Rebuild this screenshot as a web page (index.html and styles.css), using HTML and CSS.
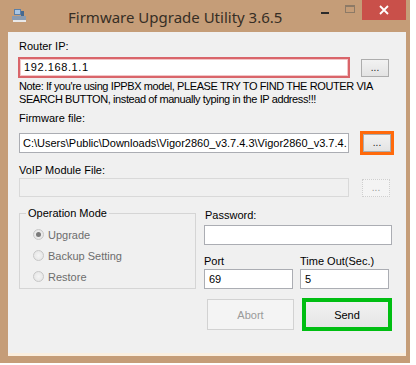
FILE: index.html
```html
<!DOCTYPE html>
<html lang="en">
<head>
    <meta charset="UTF-8">
    <title>Firmware Upgrade Utility 3.6.5</title>
    <link rel="stylesheet" href="styles.css">
</head>
<body>
    <div class="window">
        <!-- title bar -->
        <div class="titlebar">
            <svg class="app-icon" width="16" height="16" viewBox="0 0 16 16">
                <rect x="3" y="1" width="7" height="6" fill="#5b7fa6"/>
                <rect x="4" y="2" width="5" height="4" fill="#a9c6e4"/>
                <rect x="10" y="3" width="3" height="6" fill="#46698f"/>
                <rect x="1" y="8" width="14" height="4" fill="#8a9bb0"/>
                <rect x="2" y="12" width="13" height="2" fill="#e8e8e8"/>
            </svg>
            <div class="title">Firmware Upgrade Utility 3.6.5</div>
            <div class="caption-btns">
                <span class="cap cap-min"><i></i></span>
                <span class="cap cap-max"><i></i></span>
                <span class="cap cap-close">
                    <svg width="10" height="10" viewBox="0 0 10 10">
                        <path d="M1 1 L9 9 M9 1 L1 9" stroke="#fff" stroke-width="1.8"/>
                    </svg>
                </span>
            </div>
        </div>

        <!-- client -->
        <div class="client">
            <div class="label">Router IP:</div>
            <div class="row row-ip">
                <div class="field field-ip">192.168.1.1</div>
                <button class="btn-dots">...</button>
            </div>
            <div class="note">Note: If you're using IPPBX model, PLEASE TRY TO FIND THE ROUTER VIA<br>SEARCH BUTTON, instead of manually typing in the IP address!!!</div>

            <div class="label label-fw">Firmware file:</div>
            <div class="row row-fw">
                <div class="field field-fw">C:\Users\Public\Downloads\Vigor2860_v3.7.4.3\Vigor2860_v3.7.4.</div>
                <div class="mark-orange"><button class="btn-dots">...</button></div>
            </div>

            <div class="label label-voip">VoIP Module File:</div>
            <div class="row row-voip">
                <div class="field field-off"></div>
                <button class="btn-dots btn-off">...</button>
            </div>

            <div class="lower">
                <fieldset class="group">
                    <legend>Operation Mode</legend>
                    <div class="radio"><span class="dot checked"></span>Upgrade</div>
                    <div class="radio"><span class="dot"></span>Backup Setting</div>
                    <div class="radio"><span class="dot"></span>Restore</div>
                </fieldset>

                <div class="side">
                    <div class="label">Password:</div>
                    <div class="field field-pw"></div>
                    <div class="pair">
                        <div class="pair-col">
                            <div class="label">Port</div>
                            <div class="field field-sm">69</div>
                        </div>
                        <div class="pair-col">
                            <div class="label">Time Out(Sec.)</div>
                            <div class="field field-sm">5</div>
                        </div>
                    </div>
                </div>
            </div>

            <div class="actions">
                <button class="btn btn-abort">Abort</button>
                <div class="mark-green"><button class="btn btn-send">Send</button></div>
            </div>
        </div>
    </div>
</body>
</html>
```

FILE: styles.css
```css
* {
    margin: 0;
    padding: 0;
    box-sizing: border-box;
}

body {
    background: #fff;
    font-family: "Liberation Sans", Arial, sans-serif;
    font-size: 11px;
    color: #000;
}

.window {
    width: 410px;
    height: 363px;
    background: #c59d78;
    padding: 0 4px 0 8px;
    display: flex;
    flex-direction: column;
}

/* title bar */
.titlebar {
    height: 32px;
    display: flex;
    align-items: flex-start;
    flex-shrink: 0;
}

.app-icon {
    margin: 8px 0 0 3px;
}

.title {
    margin: 7px 0 0 41px;
    font-family: "Noto Sans", "Open Sans", sans-serif;
    font-size: 15px;
    color: #362e25;
}

.caption-btns {
    margin-left: auto;
    display: flex;
}

.cap {
    height: 20px;
    display: flex;
    align-items: center;
    justify-content: center;
}

.cap-min {
    width: 26px;
}

.cap-min i {
    display: block;
    width: 8px;
    height: 2px;
    background: #2b2b2b;
    margin-top: 6px;
}

.cap-max {
    width: 24px;
}

.cap-max i {
    display: block;
    width: 10px;
    height: 8px;
    border: 1px solid #8d7a66;
    border-top-width: 2px;
    margin-top: -2px;
}

.cap-close {
    width: 44px;
    background: #c9504a;
}

/* client area */
.client {
    flex: 1;
    background: #f0f0f0;
    border-bottom: 3px solid #fbefdf;
    margin-bottom: 7px;
    padding: 7px 0 0 10px;
}

.label {
    height: 14px;
    line-height: 14px;
    padding-left: 1px;
    white-space: nowrap;
}

.row {
    display: flex;
    align-items: center;
}

.row-ip {
    margin-top: 4px;
}

.field {
    height: 20px;
    width: 330px;
    background: #fff;
    border: 1px solid #abadb3;
    padding-left: 4px;
    line-height: 18px;
    white-space: nowrap;
    overflow: hidden;
}

.field-ip {
    width: 332px;
    height: 21px;
    border: 2px solid #d9656a;
    box-shadow: inset 0 0 0 1px #f3c5c7;
    padding-left: 4px;
    line-height: 17px;
    letter-spacing: 0.6px;
}

.btn-dots {
    width: 28px;
    height: 18px;
    border: 1px solid #adadad;
    background: linear-gradient(#f2f2f2, #e3e3e3);
    font-family: inherit;
    font-size: 10px;
    line-height: 12px;
    color: #222;
}

.row-ip .btn-dots {
    margin-left: 11px;
}

.note {
    margin-top: 2px;
    padding-left: 1px;
    line-height: 13px;
    letter-spacing: -0.4px;
    white-space: nowrap;
}

.label-fw {
    margin-top: 5px;
}

.row-fw {
    margin-top: 5px;
    height: 25px;
}

.field-fw {
    margin-left: 1px;
    padding-left: 3px;
}

.mark-orange {
    margin-left: 11px;
    border: 3px solid #ff6a0c;
    display: flex;
}

.label-voip {
    margin-top: 8px;
}

.row-voip {
    margin-top: 1px;
}

.field-off {
    margin-left: 1px;
    height: 19px;
    background: #f0f0f0;
    border-color: #d9d9d9;
}

.btn-off {
    margin-left: 13px;
    background: #f4f4f4;
    border: 1px dotted #cfcfcf;
    color: #9a9a9a;
}

/* lower section */
.lower {
    display: flex;
    margin-top: 9px;
}

.group {
    width: 177px;
    height: 83px;
    margin-left: 1px;
    border: 1px solid #d5d5d5;
    padding: 4px 0 0 13px;
}

.group legend {
    margin-left: -7px;
    padding: 0 2px;
    line-height: 14px;
}

.radio {
    display: flex;
    align-items: center;
    height: 21px;
    color: #6d6d6d;
}

.dot {
    width: 11px;
    height: 11px;
    border-radius: 50%;
    border: 1px solid #c7c7c7;
    background: radial-gradient(#f4f4f4, #e2e2e2);
    margin-right: 4px;
    display: flex;
    align-items: center;
    justify-content: center;
}

.dot.checked::after {
    content: "";
    width: 5px;
    height: 5px;
    border-radius: 50%;
    background: #7a7a7a;
}

.side {
    margin-left: 8px;
    margin-top: 2px;
    width: 189px;
}

.field-pw {
    width: 188px;
    margin-top: 3px;
}

.pair {
    display: flex;
    gap: 7px;
    margin-top: 9px;
}

.field-sm {
    width: 89px;
    margin-top: 1px;
}

.pair-col .label {
    padding-left: 0;
}

/* buttons */
.actions {
    display: flex;
    align-items: center;
    margin-top: 9px;
    padding-left: 189px;
}

.btn {
    width: 87px;
    height: 31px;
    font-family: inherit;
    font-size: 11px;
}

.btn-abort {
    border: 1px solid #d2d2d2;
    background: #f4f4f4;
    color: #9a9a9a;
}

.mark-green {
    margin-left: 8px;
    border: 4px solid #00be12;
    display: flex;
}

.btn-send {
    width: 82px;
    height: 25px;
    border: none;
    background: linear-gradient(#f1f1f1, #e6e6e6);
    color: #000;
}
```
